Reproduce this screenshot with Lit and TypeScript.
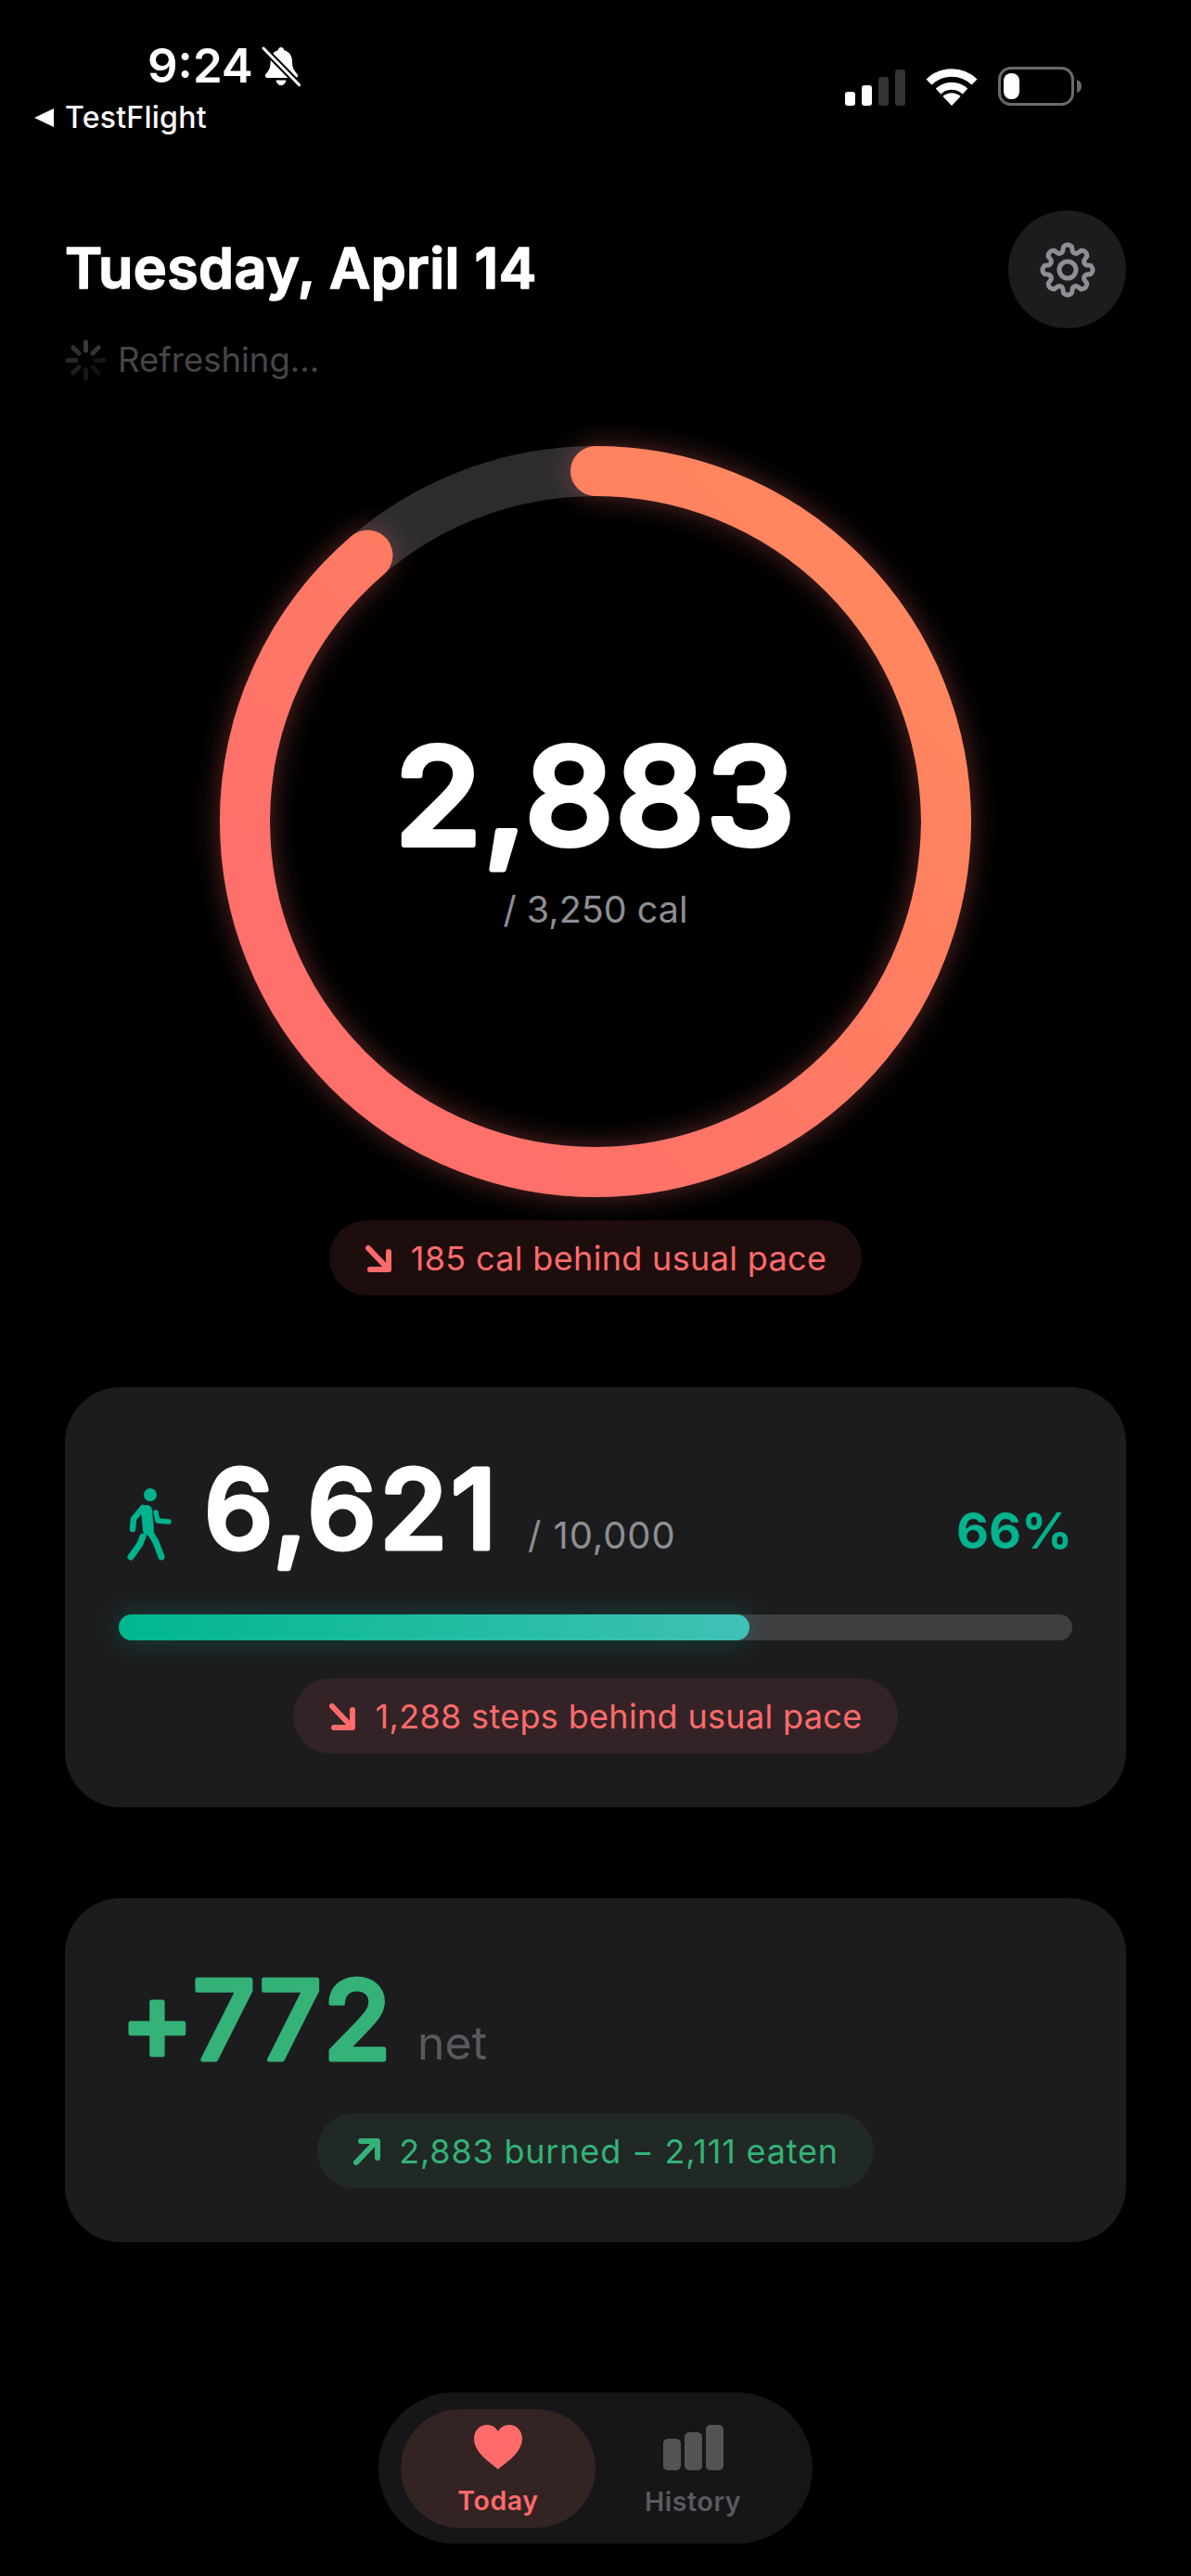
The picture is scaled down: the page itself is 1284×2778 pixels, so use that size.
import { LitElement, html, css, svg } from "lit";
import { customElement } from "lit/decorators.js";

const gearPath = () => {
  const p = (r: number, deg: number) => {
    const a = ((deg - 90) * Math.PI) / 180;
    return `${(30 + r * Math.cos(a)).toFixed(2)} ${(30 + r * Math.sin(a)).toFixed(2)}`;
  };
  let d = "";
  for (let i = 0; i < 8; i++) {
    const t = i * 45;
    d += i === 0 ? `M${p(20.5, t - 15)} ` : "";
    d += `L${p(25.5, t - 10)} Q${p(29, t)} ${p(25.5, t + 10)} L${p(20.5, t + 15)} Q${p(18.5, t + 22.5)} ${p(20.5, t + 30)} `;
  }
  return d + "Z";
};

const spokes = [0.95, 0.85, 0.35, 0.3, 0.4, 0.5, 0.65, 0.8];

const downArrow = svg`<path d="M4 4 L25 26 M26 8 V27 H6" />`;
const upArrow = svg`<path d="M4 27 L26 4 M9 4 H27 V22" />`;

@customElement("app-root")
export class AppRoot extends LitElement {
  static styles = css`
    :host {
      display: block;
      width: 1284px;
      height: 2778px;
      background: #000;
      color: #fff;
      font-family: Inter, "Liberation Sans", sans-serif;
      overflow: hidden;
    }
    .page { display: flex; flex-direction: column; height: 100%; }
    .status { height: 227px; display: flex; justify-content: space-between; align-items: flex-start; padding: 0 118px 0 37px; box-sizing: border-box; }
    .status-left { display: flex; flex-direction: column; padding-top: 40px; }
    .time-row { display: flex; align-items: center; gap: 9px; margin-left: 122px; height: 62px; }
    .time { font-size: 51px; font-weight: 600; line-height: 62px; }
    .back { display: flex; align-items: center; gap: 12px; height: 40px; margin-top: 5px; }
    .back-text { font-size: 32px; font-weight: 500; line-height: 40px; letter-spacing: 0.25px; }
    .status-right { display: flex; align-items: flex-end; padding-top: 72px; }
    .signal { display: flex; align-items: flex-end; gap: 7px; height: 41px; }
    .signal i { display: block; width: 11px; border-radius: 3px; background: #333335; }
    .signal i.on { background: #fff; }
    .s1 { height: 15px; } .s2 { height: 22px; } .s3 { height: 31px; } .s4 { height: 39px; }
    .wifi { margin-left: 22px; display: block; }
    .battery { margin-left: 22px; display: block; }
    svg { display: block; flex: none; }

    .header { display: flex; justify-content: space-between; align-items: center; padding: 0 70px; height: 127px; }
    .gear { width: 127px; height: 127px; border-radius: 50%; background: #1c1c1e; display: flex; align-items: center; justify-content: center; }
    .refresh { display: flex; align-items: center; gap: 12px; padding: 0 70px; height: 46px; margin-top: 11px; }
    .refresh-text { font-size: 36.5px; line-height: 46px; color: #464648; }

    .ring { position: relative; width: 810px; height: 810px; margin: 70px auto 0; }
    .ring-svg { overflow: visible; }
    .ring-center { position: absolute; inset: 0; display: flex; flex-direction: column; align-items: center; padding-top: 320px; box-sizing: border-box; }
    .rounded { overflow: visible; fill: currentColor; stroke: currentColor; stroke-linejoin: round; font-family: Inter, sans-serif; font-weight: 500; }
    .title-svg { font-size: 61px; font-weight: 600; stroke-width: 1.6px; letter-spacing: 0.35px; }
    .big { font-size: 145px; stroke-width: 6px; letter-spacing: 1.5px; }
    .mid { font-size: 118px; stroke-width: 5px; }
    .steps-text { letter-spacing: 4px; }
    .net-text { letter-spacing: 1.9px; }
    .sub { font-size: 39.5px; line-height: 46px; color: #8e8e93; margin-top: 47px; }

    .pill { display: flex; align-items: center; align-self: center; gap: 20px; height: 81px; border-radius: 40.5px; padding: 0 38px; font-size: 36px; line-height: 46px; letter-spacing: 0.33px; box-sizing: border-box; }
    .pill svg { fill: none; stroke: currentColor; stroke-width: 6; stroke-linecap: round; stroke-linejoin: round; }
    .red { color: #ff6b6b; }
    .green { color: #34b277; }
    .pill.cal { background: #1e0d0d; margin-top: 25px; }
    .pill.steps { background: #332326; margin-top: 41px; }
    .pill.net { background: #202926; letter-spacing: 0.8px; }

    .card { display: flex; flex-direction: column; margin: 0 70px; background: #1c1c1e; border-radius: 60px; padding: 58px; box-sizing: border-box; }
    .card.one { margin-top: 99px; height: 453px; }
    .card.two { margin-top: 98px; height: 371px; }
    .row { display: flex; align-items: baseline; height: 150px; margin-top: -4px; }
    .walker { align-self: flex-start; margin: 55px 0 0 9px; fill: none; stroke: #00b38f; stroke-linecap: round; stroke-linejoin: round; }
    .steps-num { margin-left: 34px; }
    .num-box { height: 120px; }
    .target { font-size: 40px; line-height: 50px; letter-spacing: 0.9px; color: #8e8e93; margin-left: 30px; }
    .pct { margin-left: auto; font-size: 54px; font-weight: 700; line-height: 60px; color: #00b38f; }
    .bar { height: 28px; border-radius: 14px; background: #3f3f41; margin-top: 41px; flex: none; }
    .bar-fill { height: 100%; border-radius: 14px; background: linear-gradient(90deg, #00b68f, #40c1b5); box-shadow: 0 0 30px rgba(0, 184, 148, 0.28); }
    .net-row { margin-bottom: 29px; }
    .net-num { color: #34b277; margin-left: 2px; }
    .net-label { font-size: 50px; line-height: 60px; color: #5a5a5e; margin-left: 30px; }

    .nav { margin: auto auto 35px; width: 468px; height: 163px; border-radius: 81.5px; background: #161618; display: flex; align-items: center; padding: 0 24px; box-sizing: border-box; }
    .tab { width: 210px; height: 128px; border-radius: 64px; display: flex; flex-direction: column; align-items: center; font-size: 28.5px; font-weight: 600; letter-spacing: 0.6px; line-height: 36px; color: #5a5a5e; box-sizing: border-box; padding-top: 17px; }
    .tab.active { background: #332322; color: #ff6b6b; }
    .tab-label { margin-top: 16px; }
    .hist { margin-left: 0; }
    .bars { display: flex; align-items: flex-end; gap: 4px; height: 49px; }
    .bars i { display: block; width: 19px; border-radius: 5px; background: #545456; }
    .b1 { height: 34px; } .b2 { height: 41px; } .b3 { height: 49px; }
  `;

  render() {
    const r = 378;
    const c = 2 * Math.PI * r;
    const frac = 2883 / 3250;
    return html`
      <div class="page">
        <div class="status">
          <div class="status-left">
            <div class="time-row">
              <span class="time">9:24</span>
              <svg width="42" height="43" viewBox="0 0 42 43">
                <path fill="#fff" d="M21 1c2 0 3 1.500 3.400 3.200 6 1.600 8.600 6.600 8.600 12 0 6 1.600 9.500 5 13 2 2 1 4.800-1.600 4.800H6.600C4 34 3 31.200 5 29.200c3.400-3.500 4.600-7 4.600-13 0-5.400 2.600-10.400 8-12C18 2.500 19 1 21 1zM15.500 36.500h11c-.5 3.500-2.800 5.500-5.500 5.500s-5-2-5.500-5.500z"/>
                <path stroke="#000" stroke-width="7" d="M2 2 L41 42"/>
                <path stroke="#fff" stroke-width="3" stroke-linecap="round" d="M2 2 L41 42"/>
              </svg>
            </div>
            <div class="back">
              <svg width="21" height="20" viewBox="0 0 21 20"><path fill="#fff" d="M21 0V20L0 10Z"/></svg>
              <span class="back-text">TestFlight</span>
            </div>
          </div>
          <div class="status-right">
            <div class="signal">
              <i class="s1 on"></i><i class="s2 on"></i><i class="s3"></i><i class="s4"></i>
            </div>
            <svg class="wifi" width="56" height="41" viewBox="0 0 56 41" fill="none" stroke="#fff">
              <path stroke-width="8.500" d="M3.500 15.500 A35 35 0 0 1 52.500 15.500"/>
              <path stroke-width="8" d="M13.500 25.500 A21 21 0 0 1 42.500 25.500"/>
              <path fill="#fff" stroke="none" d="M28 41 L18.500 31 A14 14 0 0 1 37.500 31Z"/>
            </svg>
            <svg class="battery" width="90" height="42" viewBox="0 0 90 42">
              <rect x="1.500" y="1.500" width="79" height="39" rx="12" fill="none" stroke="#6a6a6c" stroke-width="3"/>
              <rect x="6" y="7" width="17" height="28" rx="8" fill="#fff"/>
              <path fill="#6a6a6c" d="M85 14c3 1 5 3.500 5 7s-2 6-5 7z"/>
            </svg>
          </div>
        </div>

        <div class="header">
          <svg class="rounded title-svg" width="520" height="72" viewBox="0 0 520 72">
            <text x="0" y="56">Tuesday, April 14</text>
          </svg>
          <div class="gear">
            <svg width="60" height="60" viewBox="0 0 60 60" fill="none" stroke="#8e8e93" stroke-width="5" stroke-linejoin="round">
              <path d=${gearPath()}/>
              <circle cx="30" cy="30" r="9"/>
            </svg>
          </div>
        </div>

        <div class="refresh">
          <svg width="45" height="45" viewBox="0 0 45 45" stroke="#3c3c3e" stroke-width="5" stroke-linecap="round">
            ${spokes.map(
              (o, i) => svg`<path opacity=${o} transform=${`rotate(${i * 45} 22.500 22.500)`} d="M22.500 3 V12"/>`
            )}
          </svg>
          <span class="refresh-text">Refreshing...</span>
        </div>

        <div class="ring">
          <svg class="ring-svg" width="810" height="810" viewBox="0 0 810 810">
            <defs>
              <linearGradient id="rg" gradientUnits="userSpaceOnUse" x1="700" y1="200" x2="200" y2="650" gradientTransform="rotate(90 405 405)">
                <stop offset="0" stop-color="#ff865e"/>
                <stop offset="1" stop-color="#ff6f6a"/>
              </linearGradient>
              <filter id="glow" x="-15%" y="-15%" width="130%" height="130%">
                <feDropShadow dx="0" dy="0" stdDeviation="15" flood-color="#ff6b6b" flood-opacity="0.36"/>
              </filter>
            </defs>
            <circle cx="405" cy="405" r=${r} fill="none" stroke="#2c2c2e" stroke-width="54"/>
            <circle cx="405" cy="405" r=${r} fill="none" stroke="url(#rg)" stroke-width="54" stroke-linecap="round"
              stroke-dasharray=${`${c * frac} ${c}`} transform="rotate(-90 405 405)" filter="url(#glow)"/>
          </svg>
          <div class="ring-center">
            <svg class="rounded big" width="430" height="110" viewBox="0 0 430 110">
              <text x="215" y="110" text-anchor="middle" transform="translate(215 0) scale(1.055 1) translate(-215 0)">2,883</text>
            </svg>
            <div class="sub">/ 3,250 cal</div>
          </div>
        </div>

        <div class="pill cal red">
          <svg width="30" height="30" viewBox="0 0 30 30">${downArrow}</svg>
          <span>185 cal behind usual pace</span>
        </div>

        <div class="card one">
          <div class="row">
            <svg class="walker" width="49" height="78" viewBox="0 0 49 78">
              <circle cx="25" cy="7" r="7" fill="#00b38f" stroke="none"/>
              <path stroke-width="12" d="M21 24 L23 45"/>
              <path stroke-width="6.500" d="M17 21 L7 33 L6 44"/>
              <path stroke-width="7" d="M24 46 L31 58 L37 74"/>
              <path stroke-width="7" d="M17 52 L14 60 L4 74"/>
              <path stroke-width="5.500" d="M31 26 L33 35 L45 36"/>
            </svg>
            <svg class="rounded mid steps-num num-box" width="319" height="120" viewBox="0 0 319 120">
              <text class="steps-text" x="0" y="120">6,621</text>
            </svg>
            <span class="target">/ 10,000</span>
            <span class="pct">66%</span>
          </div>
          <div class="bar"><div class="bar-fill" style="width: ${(680 / 1028) * 100}%"></div></div>
          <div class="pill steps red">
            <svg width="30" height="30" viewBox="0 0 30 30">${downArrow}</svg>
            <span>1,288 steps behind usual pace</span>
          </div>
        </div>

        <div class="card two">
          <div class="row net-row">
            <svg class="rounded mid net-num num-box" width="290" height="120" viewBox="0 0 290 120">
              <text class="net-text" x="0" y="120">+772</text>
            </svg>
            <span class="net-label">net</span>
          </div>
          <div class="pill net green">
            <svg width="30" height="30" viewBox="0 0 30 30">${upArrow}</svg>
            <span>2,883 burned − 2,111 eaten</span>
          </div>
        </div>

        <div class="nav">
          <div class="tab active">
            <svg width="52" height="48" viewBox="0 0 52 48"><path fill="#ff6b6b" d="M26 48 C21 43 0 31 0 15 C0 6 6.500 0 14 0 C19 0 23.500 2.500 26 7 C28.500 2.500 33 0 38 0 C45.500 0 52 6 52 15 C52 31 31 43 26 48Z"/></svg>
            <span class="tab-label">Today</span>
          </div>
          <div class="tab hist">
            <div class="bars"><i class="b1"></i><i class="b2"></i><i class="b3"></i></div>
            <span class="tab-label">History</span>
          </div>
        </div>
      </div>
    `;
  }
}
